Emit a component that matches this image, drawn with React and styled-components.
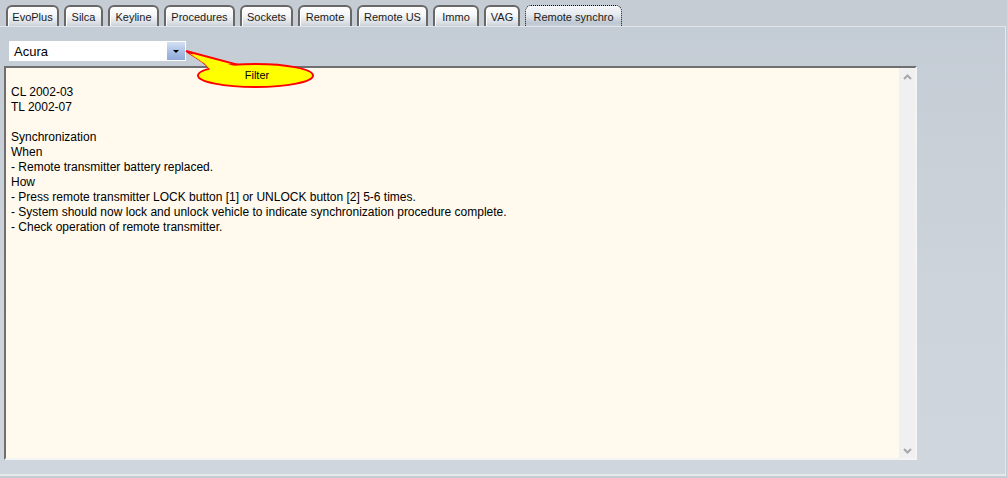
import React, { useState } from "react";
import styled, { createGlobalStyle } from "styled-components";

const GlobalStyle = createGlobalStyle`
  html, body {
    margin: 0;
    padding: 0;
    background: #c5ccd4;
  }
  #root {
    width: 1007px;
    height: 478px;
    overflow: hidden;
  }
`;

const Window = styled.div`
  width: 1007px;
  height: 478px;
  display: flex;
  flex-direction: column;
  background: #c5ccd4;
  font-family: "Liberation Sans", Arial, sans-serif;
`;

const TabBar = styled.div`
  height: 26px;
  box-sizing: border-box;
  padding: 5px 0 0 6px;
  display: flex;
  gap: 5px;
  align-items: flex-end;
`;

const Tab = styled.div`
  width: ${(p) => p.$w}px;
  height: 21px;
  box-sizing: border-box;
  border: ${(p) => (p.$active ? "1px dotted #111" : "2px solid #686868")};
  border-bottom: none;
  border-radius: 6px 6px 0 0;
  background: ${(p) =>
    p.$active
      ? "linear-gradient(180deg, #f6f8fa 0%, #e4e9ee 45%, #bcc7d2 85%, #c9d1d9 100%)"
      : "linear-gradient(180deg, #ffffff 0%, #f4f5f7 45%, #d9dee4 85%, #c9d0d8 100%)"};
  box-shadow: ${(p) => (p.$active ? "none" : "inset 1px 1px 0 #ffffff")};
  font-size: 11px;
  color: #1a1a1a;
  display: flex;
  align-items: center;
  justify-content: center;
  padding-top: 1px;
  white-space: nowrap;
`;

const Panel = styled.div`
  position: relative;
  flex: 1;
  border-top: 1px solid #e2e6ea;
  border-right: 1px solid #e4e8ec;
  border-bottom: 2px solid #e6e9ec;
  margin-bottom: 2px;
  margin-right: 1px;
  background: linear-gradient(180deg, #c4ccd5 0%, #cdd4db 60%, #d0d6dd 100%);
  padding: 14px 0 0 4px;
  display: flex;
  flex-direction: column;
  gap: 5px;
`;

const SelectBox = styled.div`
  margin-left: 5px;
  width: 177px;
  height: 20px;
  background: #fff;
  display: flex;
  align-items: center;
  justify-content: space-between;
  box-sizing: border-box;
`;

const SelectText = styled.span`
  font-size: 13px;
  color: #000;
  padding-left: 5px;
`;

const SelectButton = styled.div`
  width: 18px;
  height: 18px;
  margin-right: 1px;
  background: linear-gradient(180deg, #d5e1f3 0%, #a8bfe4 55%, #8fa9d8 100%);
  display: flex;
  align-items: center;
  justify-content: center;
  &::after {
    content: "";
    border-left: 3px solid transparent;
    border-right: 3px solid transparent;
    border-top: 3px solid #000;
  }
`;

const TextBox = styled.div`
  width: 913px;
  height: 394px;
  box-sizing: border-box;
  border-top: 2px solid #6f6f6f;
  border-left: 2px solid #6f6f6f;
  border-right: 2px solid #f4f4f4;
  border-bottom: 2px solid #f4f4f4;
  background: #fff9ee;
  display: flex;
`;

const Content = styled.div`
  flex: 1;
  padding: 2px 0 0 5px;
  font-size: 12px;
  line-height: 15px;
  color: #000;
  white-space: pre;
`;

const ScrollBar = styled.div`
  width: 16px;
  background: #f0f0f0;
  display: flex;
  flex-direction: column;
  justify-content: space-between;
  align-items: center;
  padding: 6px 0 4px;
`;

const Callout = styled.svg`
  position: absolute;
  left: 180px;
  top: 19px;
`;

const tabs = [
  ["EvoPlus", 53],
  ["Silca", 39],
  ["Keyline", 51],
  ["Procedures", 71],
  ["Sockets", 53],
  ["Remote", 54],
  ["Remote US", 71],
  ["Immo", 46],
  ["VAG", 36],
  ["Remote synchro", 97],
];

const lines = [
  "",
  "CL 2002-03",
  "TL 2002-07",
  "",
  "Synchronization",
  "When",
  "- Remote transmitter battery replaced.",
  "How",
  "- Press remote transmitter LOCK button [1] or UNLOCK button [2] 5-6 times.",
  "- System should now lock and unlock vehicle to indicate synchronization procedure complete.",
  "- Check operation of remote transmitter.",
];

const Chevron = ({ up }) => (
  <svg width="9" height="6" viewBox="0 0 9 6">
    <path
      d={up ? "M1 5 L4.5 1.5 L8 5" : "M1 1 L4.5 4.5 L8 1"}
      fill="none"
      stroke="#a8a8a8"
      strokeWidth="2"
    />
  </svg>
);

// pointer of the "Filter" balloon, drawn in page coordinates
const pointer = "M186 51 L203 62 L210 68.5 L222 74 L237 64.6 Z";
const pointerFill = "M189.5 53.5 L204.5 63.5 L211.5 71 L230 72 L235.5 66.2 Z";

const App = () => {
  const [active] = useState("Remote synchro");
  return (
    <Window>
      <GlobalStyle />
      <TabBar>
        {tabs.map(([name, w]) => (
          <Tab key={name} $w={w} $active={name === active}>
            {name}
          </Tab>
        ))}
      </TabBar>
      <Panel>
        <SelectBox>
          <SelectText>Acura</SelectText>
          <SelectButton />
        </SelectBox>
        <TextBox>
          <Content>
            {lines.map((l, i) => (
              <div key={i}>{l || "\u00a0"}</div>
            ))}
          </Content>
          <ScrollBar>
            <Chevron up />
            <Chevron />
          </ScrollBar>
        </TextBox>
        <Callout width="140" height="50" viewBox="180 46 140 50">
          <path d={pointer} fill="#ffff00" stroke="#ff0000" strokeWidth="2" />
          <ellipse
            cx="255.5"
            cy="75.5"
            rx="57.5"
            ry="11.5"
            fill="#ffff00"
            stroke="#ff0000"
            strokeWidth="2"
          />
          <path d={pointerFill} fill="#ffff00" />
          <text
            x="257"
            y="79"
            textAnchor="middle"
            fontFamily="Liberation Sans, Arial, sans-serif"
            fontSize="11"
            fill="#000"
          >
            Filter
          </text>
        </Callout>
      </Panel>
    </Window>
  );
};

export default App;
